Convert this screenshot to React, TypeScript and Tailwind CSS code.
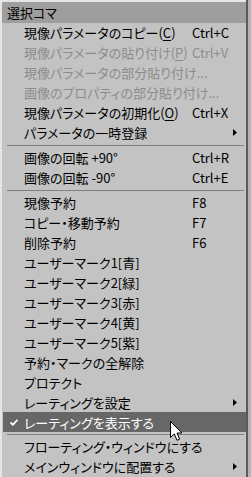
import React from "react";

type Item =
  | { kind: "sep" }
  | {
      kind: "item";
      label: React.ReactNode;
      shortcut?: string;
      disabled?: boolean;
      sub?: boolean;
      checked?: boolean;
      active?: boolean;
    };

const u = (c: string) => <span className="underline underline-offset-[2px]">{c}</span>;

const items: Item[] = [
  { kind: "item", label: <>現像パラメータのコピー({u("C")})</>, shortcut: "Ctrl+C" },
  { kind: "item", label: <>現像パラメータの貼り付け({u("P")})</>, shortcut: "Ctrl+V", disabled: true },
  { kind: "item", label: "現像パラメータの部分貼り付け...", disabled: true },
  { kind: "item", label: "画像のプロパティの部分貼り付け...", disabled: true },
  { kind: "item", label: <>現像パラメータの初期化({u("O")})</>, shortcut: "Ctrl+X" },
  { kind: "item", label: "パラメータの一時登録", sub: true },
  { kind: "sep" },
  { kind: "item", label: "画像の回転 +90°", shortcut: "Ctrl+R" },
  { kind: "item", label: "画像の回転 -90°", shortcut: "Ctrl+E" },
  { kind: "sep" },
  { kind: "item", label: "現像予約", shortcut: "F8" },
  { kind: "item", label: "コピー・移動予約", shortcut: "F7" },
  { kind: "item", label: "削除予約", shortcut: "F6" },
  { kind: "item", label: "ユーザーマーク1[青]" },
  { kind: "item", label: "ユーザーマーク2[緑]" },
  { kind: "item", label: "ユーザーマーク3[赤]" },
  { kind: "item", label: "ユーザーマーク4[黄]" },
  { kind: "item", label: "ユーザーマーク5[紫]" },
  { kind: "item", label: "予約・マークの全解除" },
  { kind: "item", label: "プロテクト" },
  { kind: "item", label: "レーティングを設定", sub: true },
  { kind: "item", label: "レーティングを表示する", checked: true, active: true },
  { kind: "sep" },
  { kind: "item", label: "フローティング・ウィンドウにする" },
  { kind: "item", label: "メインウィンドウに配置する", sub: true },
];

function SubArrow({ light }: { light?: boolean }) {
  return (
    <svg width="4" height="7" viewBox="0 0 4 7" className="block">
      <path d="M0 0 L4 3.5 L0 7 Z" fill={light ? "#ffffff" : "#000000"} />
    </svg>
  );
}

function Check() {
  return (
    <svg width="8" height="7" viewBox="0 0 8 7" className="block">
      <path d="M0.5 3.5 L2.8 5.8 L7.5 0.8" fill="none" stroke="#ffffff" strokeWidth="1.8" />
    </svg>
  );
}

function Cursor() {
  return (
    <svg width="13" height="21" viewBox="0 0 13 21" className="block">
      <path
        d="M0.5 0.5 L0.5 16.5 L4.3 12.9 L7 19.3 L9.6 18.2 L7 12 L12 12 Z"
        fill="#ffffff"
        stroke="#000000"
        strokeWidth="1"
        strokeLinejoin="miter"
      />
    </svg>
  );
}

export default function App() {
  return (
    <div
      className="relative flex w-[251px] h-[477px] overflow-hidden bg-[#b4b4b4] text-[13px] leading-none text-black [font-feature-settings:'palt']"
      style={{ fontFamily: '"Noto Sans CJK JP", "Noto Sans", sans-serif' }}
    >
      <div className="flex w-[246px] flex-col border-l-2 border-t-2 border-[#e6e6e6] bg-[#c3c3c3]">
        <div className="flex h-[21px] items-center bg-[#9e9e9e] pl-[5px]">選択コマ</div>

        {items.map((it, i) =>
          it.kind === "sep" ? (
            <div key={i} className="h-[5px] pt-[2px] pl-[5px] pr-[2px]">
              <div className="h-px bg-[#808080]" />
            </div>
          ) : (
            <div key={i} className="h-[20px] pl-px">
              <div
                className={
                  "flex h-full items-center " +
                  (it.active ? "bg-[#676767] text-white" : it.disabled ? "text-[#8c8c8c]" : "")
                }
              >
                <div className="flex w-[21px] justify-start pl-[7px]">{it.checked && <Check />}</div>
                <div className="w-[168px] whitespace-nowrap">{it.label}</div>
                <div className="w-[40px] whitespace-nowrap">{it.shortcut}</div>
                <div className="flex w-[10px] justify-start pl-px">{it.sub && <SubArrow light={it.active} />}</div>
              </div>
            </div>
          )
        )}
      </div>
      <div className="w-[2px] bg-[#5a5a5a]" />

      <div className="absolute left-[170px] top-[421px]">
        <Cursor />
      </div>
    </div>
  );
}
